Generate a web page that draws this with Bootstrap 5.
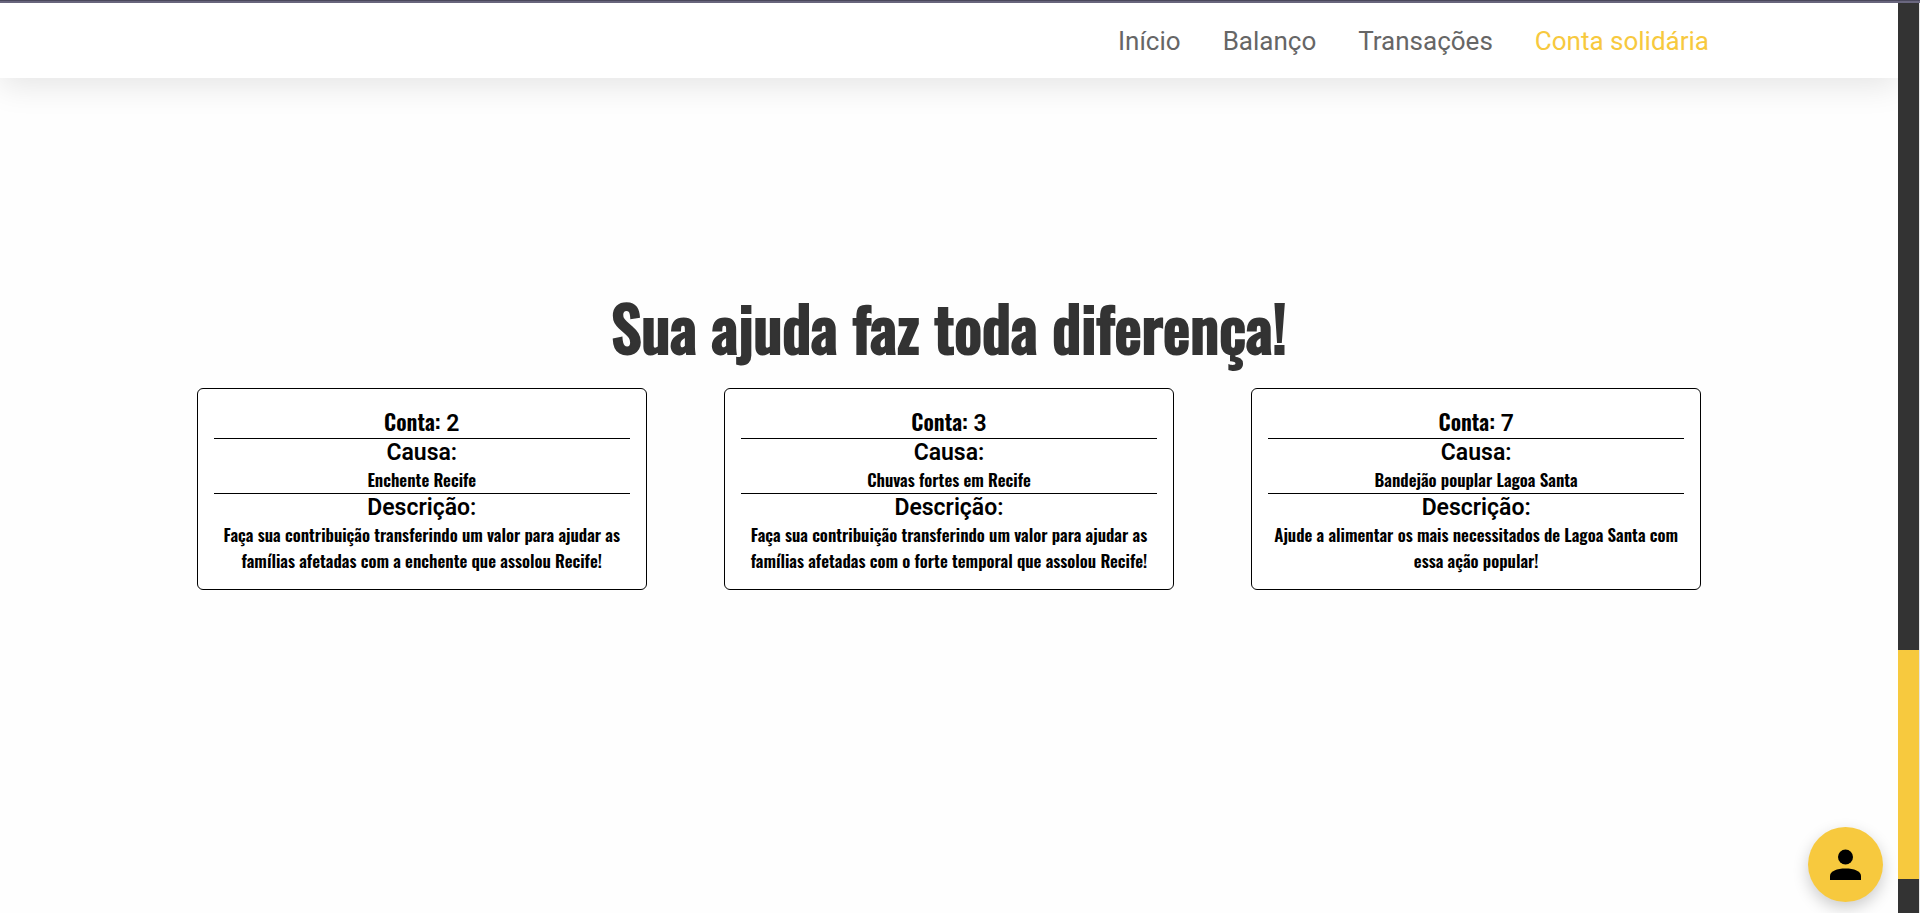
<!DOCTYPE html>
<html lang="pt-br">
<head>
<meta charset="utf-8">
<meta name="viewport" content="width=device-width, initial-scale=1">
<title>Conta solidária</title>
<link href="https://cdn.jsdelivr.net/npm/bootstrap@5.3.0/dist/css/bootstrap.min.css" rel="stylesheet">
<style>
  :root { --gold: #f7c93e; --ink: #333333; }
  body { font-family: Roboto, sans-serif; background: #fefefe; color: #000; }
  .condensed { font-family: Oswald, "Liberation Sans Narrow", sans-serif; font-weight: 600; }
  .top-strip { height: 3px; background: #6b6880; border-top: 1px solid #4c4a5e; }
  .scroll-track { width: 22px; background: var(--ink); border-right: 1px solid #e6e6e6; }
  .scroll-lead { flex: 647 0 0; }
  .scroll-thumb { flex: 229 0 0; background: var(--gold); }
  .scroll-rest { flex: 34 0 0; }
  .site-header { height: 75px; background: #fff; box-shadow: 0 8px 32px rgba(0,0,0,.1); padding-right: 189px; }
  .site-header .nav { gap: 42px; }
  .site-header .nav-link { padding: 0; font-size: 26px; line-height: 36px; color: #666; }
  .site-header .nav-link.active { color: var(--gold); }
  .causes { padding-bottom: 116px; }
  .headline { font-size: 61px; font-weight: 500; line-height: 84px; margin-bottom: 19px; color: var(--ink); -webkit-text-stroke: 2px var(--ink); }
  .cause { max-width: 450px; border: 1px solid #000; border-radius: 6px; padding: 20px 16px 15px; background: #fff; }
  .cause section { border-bottom: 1px solid #000; }
  .cause section:last-child { border-bottom: 0; }
  .cause h2, .cause h3 { font-size: 23px; font-weight: 600; line-height: 29px; margin: 0; }
  .cause h2 .condensed { font-size: 22px; line-height: 1; }
  .cause h3 { line-height: 28px; }
  .cause p { font-size: 17px; line-height: 26px; margin: 0; }
  .profile-btn { width: 75px; height: 75px; right: 37px; bottom: 11px; background: var(--gold); box-shadow: 0 6px 16px rgba(0,0,0,.2); }
  .profile-btn:hover { background: var(--gold); }
</style>
</head>
<body class="d-flex flex-column vh-100 overflow-hidden">
<div class="top-strip flex-shrink-0"></div>
<div class="d-flex flex-grow-1">
  <div class="d-flex flex-column flex-grow-1">
    <header class="site-header d-flex align-items-center justify-content-end">
      <nav class="nav">
        <a class="nav-link" href="#">Início</a>
        <a class="nav-link" href="#">Balanço</a>
        <a class="nav-link" href="#">Transações</a>
        <a class="nav-link active" href="#" aria-current="page">Conta solidária</a>
      </nav>
    </header>
    <main class="causes flex-grow-1 d-flex flex-column justify-content-center">
      <h1 class="condensed headline text-center">Sua ajuda faz toda diferença!</h1>
      <div class="row g-0 justify-content-center">
        <div class="col-10">
          <div class="row g-0">
            <div class="col-4 d-flex justify-content-center">
              <article class="cause w-100 text-center">
                <section><h2><span class="condensed">Conta:</span> 2</h2></section>
                <section><h3>Causa:</h3><p class="condensed">Enchente Recife</p></section>
                <section><h3>Descrição:</h3><p class="condensed">Faça sua contribuição transferindo um valor para ajudar as famílias afetadas com a enchente que assolou Recife!</p></section>
              </article>
            </div>
            <div class="col-4 d-flex justify-content-center">
              <article class="cause w-100 text-center">
                <section><h2><span class="condensed">Conta:</span> 3</h2></section>
                <section><h3>Causa:</h3><p class="condensed">Chuvas fortes em Recife</p></section>
                <section><h3>Descrição:</h3><p class="condensed">Faça sua contribuição transferindo um valor para ajudar as famílias afetadas com o forte temporal que assolou Recife!</p></section>
              </article>
            </div>
            <div class="col-4 d-flex justify-content-center">
              <article class="cause w-100 text-center">
                <section><h2><span class="condensed">Conta:</span> 7</h2></section>
                <section><h3>Causa:</h3><p class="condensed">Bandejão pouplar Lagoa Santa</p></section>
                <section><h3>Descrição:</h3><p class="condensed">Ajude a alimentar os mais necessitados de Lagoa Santa com essa ação popular!</p></section>
              </article>
            </div>
          </div>
        </div>
      </div>
    </main>
  </div>
  <div class="scroll-track d-flex flex-column flex-shrink-0" aria-hidden="true">
    <div class="scroll-lead"></div><div class="scroll-thumb"></div><div class="scroll-rest"></div>
  </div>
</div>
<button type="button" class="profile-btn btn position-fixed rounded-circle border-0 p-0 d-flex align-items-center justify-content-center" aria-label="Perfil">
  <svg width="31" height="31" viewBox="0 0 31 31" aria-hidden="true"><circle cx="15.500" cy="8" r="7.500"/><path d="M0 31v-4c0-5 7-7.500 15.500-7.500S31 22 31 27v4z"/></svg>
</button>
<script src="https://cdn.jsdelivr.net/npm/bootstrap@5.3.0/dist/js/bootstrap.bundle.min.js"></script>
</body>
</html>
